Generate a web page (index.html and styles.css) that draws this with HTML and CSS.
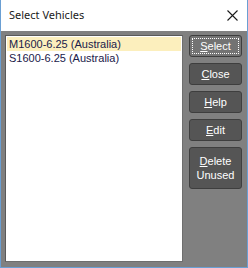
FILE: index.html
```html
<!DOCTYPE html>
<html lang="en">
<head>
    <meta charset="UTF-8">
    <title>Select Vehicles</title>
    <link rel="stylesheet" href="styles.css">
</head>
<body>
    <div class="window">
        <div class="titlebar">
            <span class="title">Select Vehicles</span>
            <svg class="close-x" width="11" height="11" viewBox="0 0 11 11">
                <path d="M0.5 0.5 L10.5 10.5 M10.5 0.5 L0.5 10.5" stroke="#1a1a1a" stroke-width="1.1" fill="none"/>
            </svg>
        </div>
        <div class="content">
            <div class="listbox">
                <div class="item selected">M1600-6.25 (Australia)</div>
                <div class="item">S1600-6.25 (Australia)</div>
            </div>
            <div class="buttons">
                <button class="btn focused"><span class="focus-rect"><u>S</u>elect</span></button>
                <button class="btn"><u>C</u>lose</button>
                <button class="btn"><u>H</u>elp</button>
                <button class="btn"><u>E</u>dit</button>
                <button class="btn tall"><u>D</u>elete<br>Unused</button>
            </div>
        </div>
    </div>
</body>
</html>
```

FILE: styles.css
```css
body {
    margin: 0;
    font-family: "Liberation Sans", Arial, sans-serif;
}
.window {
    width: 248px;
    height: 268px;
    box-sizing: border-box;
    border: 1px solid #6a9fd3;
    border-top: none;
    display: flex;
    flex-direction: column;
    background: #808080;
}
.titlebar {
    height: 31px;
    background: white;
    display: flex;
    align-items: center;
    justify-content: space-between;
    padding: 0 9px 0 8px;
    flex-shrink: 0;
}
.title {
    font-family: "Noto Sans", sans-serif;
    font-size: 11px;
    color: #1a1a1a;
    margin-top: -2px;
}
.close-x {
    margin-top: -1px;
}
.content {
    flex: 1;
    display: flex;
    padding: 4px 5px 4px 4px;
    gap: 6px;
}
.listbox {
    width: 178px;
    height: 227px;
    box-sizing: border-box;
    background: white;
    border: 1px solid #5a5a5a;
    border-right-color: #6e6e6e;
    border-bottom-color: #6e6e6e;
    padding: 1px;
}
.item {
    height: 14px;
    line-height: 14px;
    font-size: 11px;
    color: #20204a;
    padding-left: 2px;
}
.item.selected {
    background: #fcefbd;
}
.buttons {
    display: flex;
    flex-direction: column;
    gap: 6px;
    width: 53px;
}
.btn {
    height: 22px;
    width: 53px;
    padding: 0;
    background: #555555;
    border: 1px solid #3e3e3e;
    border-radius: 3px;
    color: white;
    font-family: "Liberation Sans", Arial, sans-serif;
    font-size: 11px;
    line-height: 14px;
}
.btn.focused {
    background: #737373;
    padding: 2px;
}
.focus-rect {
    display: block;
    height: 100%;
    box-sizing: border-box;
    border: 1px dotted white;
    line-height: 14px;
}
.btn.tall {
    height: 42px;
}
```
